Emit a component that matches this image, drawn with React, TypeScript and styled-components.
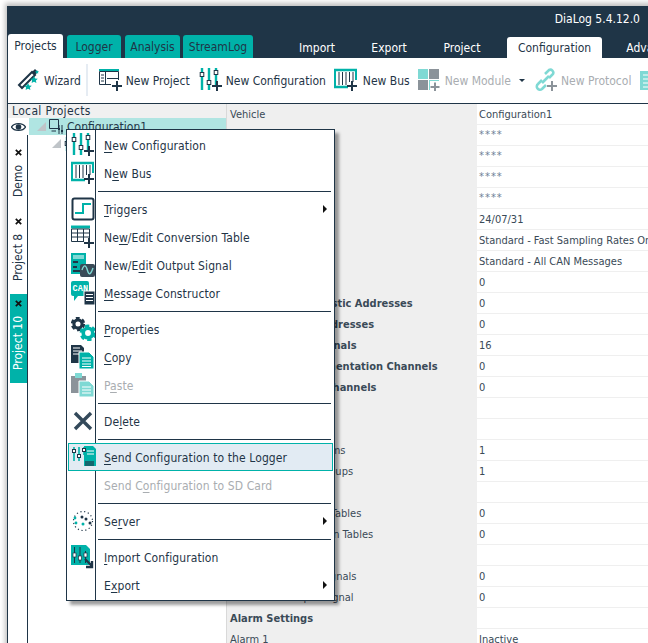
import React from "react";
import styled, { createGlobalStyle } from "styled-components";

const TEAL = "#00b2a9";
const DARK = "#1f3547";
const LTEAL = "#7fd9d4";
const GREY = "#8b939a";
const FONT = `"DejaVu Sans Condensed", "DejaVu Sans", sans-serif`;

const Global = createGlobalStyle`
  html, body { margin: 0; padding: 0; width: 648px; height: 643px; overflow: hidden; background: #fff; }
  #root { width: 648px; height: 643px; overflow: hidden; }
`;

const Page = styled.div`
  width: 648px;
  height: 643px;
  padding: 6px 0 0 7px;
  box-sizing: border-box;
  background: #fff;
  font-family: ${FONT};
  font-stretch: condensed;
  font-size: 12px;
  color: #222;
  overflow: hidden;
`;
const Window = styled.div`
  position: relative;
  width: 660px;
  height: 650px;
  border-left: 1px solid ${DARK};
  box-shadow: -2px -3px 5px rgba(0, 0, 0, 0.25);
  background: #fff;
  display: flex;
  flex-direction: column;
`;
const Header = styled.div`
  height: 52px;
  flex: none;
  background: ${DARK};
  display: flex;
  flex-direction: column;
`;
const TitleRow = styled.div`
  height: 29px;
  width: 632px;
  box-sizing: border-box;
  color: #fff;
  text-align: right;
  line-height: 26px;
`;
const TabRow = styled.div`
  height: 23px;
  display: flex;
  align-items: flex-end;
`;
const MainTab = styled.div<{ $active?: boolean; $w: number; $ml: number }>`
  width: ${(p) => p.$w}px;
  margin-left: ${(p) => p.$ml}px;
  height: ${(p) => (p.$active ? 24 : 23)}px;
  flex: none;
  text-align: center;
  line-height: 25px;
  box-sizing: border-box;
  border-radius: 3px 3px 0 0;
  color: ${DARK};
  background: ${(p) => (p.$active ? "#fff" : TEAL)};
`;
const RibbonTab = styled.div<{ $active?: boolean; $w: number; $ml?: number }>`
  width: ${(p) => p.$w}px;
  margin-left: ${(p) => p.$ml ?? 0}px;
  height: 21px;
  flex: none;
  text-align: center;
  line-height: 23px;
  border-radius: 3px 3px 0 0;
  color: ${(p) => (p.$active ? DARK : "#fff")};
  background: ${(p) => (p.$active ? "#fff" : "transparent")};
`;
const Toolbar = styled.div`
  height: 46px;
  flex: none;
  display: flex;
  align-items: center;
  background: #fff;
  border-bottom: 1px solid ${DARK};
  box-sizing: border-box;
  padding: 0 0 1px 9px;
`;
const ToolButton = styled.div<{ $disabled?: boolean; $ml?: number; $gap?: number }>`
  display: flex;
  align-items: center;
  gap: ${(p) => p.$gap ?? 3}px;
  margin-left: ${(p) => p.$ml ?? 0}px;
  flex: none;
  color: ${(p) => (p.$disabled ? "#a9adb1" : DARK)};
`;
const ToolLabel = styled.span`
  padding-top: 2px;
`;
const ToolSep = styled.div`
  width: 2px;
  height: 32px;
  margin: 0 11px 0 5px;
  background: #e6ecf3;
  flex: none;
`;
const Caret = styled.span`
  width: 0;
  height: 0;
  border: 3px solid transparent;
  border-top: 3px solid ${DARK};
  border-bottom: 0;
  margin-left: 3px;
`;
const Body = styled.div`
  flex: 1;
  display: flex;
  min-height: 0;
`;
const LeftPanel = styled.div`
  width: 218px;
  flex: none;
  display: flex;
  flex-direction: column;
`;
const PanelTitle = styled.div`
  height: 14px;
  line-height: 15px;
  padding-left: 4px;
  background: #f0f0f0;
  color: ${DARK};
  letter-spacing: 0.35px;
`;
const PanelMain = styled.div`
  flex: 1;
  display: flex;
`;
const Rail = styled.div`
  width: 19px;
  flex: none;
  border-right: 1px solid ${DARK};
  display: flex;
  flex-direction: column;
  align-items: flex-end;
`;
const EyeWrap = styled.div`
  height: 17px;
  width: 100%;
  background: #fff;
  display: flex;
  padding-left: 2px;
  box-sizing: border-box;
  align-items: center;
  margin-right: -1px;
  position: relative;
  z-index: 1;
  border-right: 1px solid #fff;
`;
const VerticalTab = styled.div<{ $active?: boolean; $h: number; $mt: number; $start: number }>`
  width: 17px;
  height: ${(p) => p.$h}px;
  margin-top: ${(p) => p.$mt}px;
  flex: none;
  background: ${(p) => (p.$active ? TEAL : "#fff")};
  color: ${(p) => (p.$active ? "#fff" : DARK)};
  writing-mode: vertical-rl;
  transform: rotate(180deg);
  display: flex;
  align-items: center;
  gap: 9px;
  padding-top: ${(p) => p.$start}px;
  box-sizing: border-box;
  line-height: 17px;
  white-space: nowrap;
`;
const CloseMark = styled.span`
  display: block;
  width: 7px;
  height: 7px;
  flex: none;
`;
const Tree = styled.div`
  flex: 1;
`;
const TreeRow = styled.div<{ $selected?: boolean; $indent: number }>`
  height: 17px;
  display: flex;
  align-items: center;
  gap: 3px;
  padding-left: ${(p) => p.$indent}px;
  margin-left: ${(p) => (p.$selected ? 1 : 0)}px;
  background: ${(p) => (p.$selected ? "#b0e5e2" : "transparent")};
  color: ${DARK};
  line-height: 17px;
`;
const TreeIcon = styled.span`
  display: block;
  width: 14px;
  height: 14px;
  overflow: hidden;
  flex: none;
`;
const TreeLabel = styled.span`
  padding-top: 2px;
  margin-left: -1px;
`;
const Grid = styled.div`
  flex: 1;
  display: grid;
  grid-template-columns: 250px 1fr;
  grid-auto-rows: 21px;
  border-left: 1px solid #d9d9d9;
  align-content: start;
  overflow: hidden;
  font-size: 11px;
`;
const NameCell = styled.div<{ $bold?: boolean }>`
  background: #efefef;
  padding-left: 3px;
  line-height: 22px;
  color: #3a4a57;
  font-weight: ${(p) => (p.$bold ? 700 : 400)};
  white-space: nowrap;
  overflow: hidden;
`;
const ValueCell = styled.div<{ $stars?: boolean }>`
  background: #fff;
  border-bottom: 1px solid #efefef;
  padding-left: 2px;
  line-height: ${(p) => (p.$stars ? 20 : 22)}px;
  color: ${(p) => (p.$stars ? "#6d8296" : "#3a4a57")};
  letter-spacing: ${(p) => (p.$stars ? 1 : 0)}px;
  white-space: nowrap;
  overflow: hidden;
`;
const Menu = styled.div`
  position: absolute;
  left: 58px;
  top: 123px;
  width: 269px;
  height: 472px;
  box-sizing: border-box;
  background: #fff;
  border: 1px solid ${DARK};
  box-shadow: 4px 4px 3px rgba(0, 0, 0, 0.38);
  padding: 1px 0 0 0;
  color: ${DARK};
  z-index: 5;
  letter-spacing: 0.1px;
`;
const Gutter = styled.div`
  position: absolute;
  left: 28px;
  top: 0;
  bottom: 0;
  width: 1px;
  background: ${DARK};
`;
const MenuRow = styled.div<{ $hot?: boolean; $disabled?: boolean }>`
  height: 28px;
  display: flex;
  align-items: center;
  position: relative;
  margin: 0 1px;
  box-sizing: border-box;
  color: ${(p) => (p.$disabled ? "#a9adb1" : DARK)};
  background: ${(p) => (p.$hot ? "#e2ebf3" : "transparent")};
  border: ${(p) => (p.$hot ? `1px solid ${TEAL}` : "0")};
  padding-left: ${(p) => (p.$hot ? 35 : 36)}px;
`;
const MenuLabel = styled.span`
  padding-top: 2px;
`;
const MenuIcon = styled.span`
  position: absolute;
  left: 2px;
  top: 1px;
  width: 26px;
  height: 26px;
  display: flex;
  align-items: center;
  justify-content: center;
`;
const MenuSep = styled.div`
  height: 1px;
  margin: 4px 3px 3px 31px;
  background: ${DARK};
`;
const Arrow = styled.span`
  position: absolute;
  right: 6px;
  top: 10px;
  width: 0;
  height: 0;
  border: 4px solid transparent;
  border-left: 4px solid #111;
  border-right: 0;
`;
const U = styled.span`
  text-decoration: underline;
  text-underline-offset: 2px;
  text-decoration-thickness: 1px;
`;

const Plus = ({ x, y, s = 10, c = DARK }: { x: number; y: number; s?: number; c?: string }) => (
  <path d={`M${x - s / 2} ${y}H${x + s / 2}M${x} ${y - s / 2}V${y + s / 2}`} stroke={c} strokeWidth={2} fill="none" />
);
const Svg = ({ w, h = w, children }: { w: number; h?: number; children: React.ReactNode }) => (
  <svg width={w} height={h} viewBox={`0 0 ${w} ${h}`} style={{ flex: "none", display: "block" }}>
    {children}
  </svg>
);

const Sliders = () => (
  <Svg w={24}>
    <g fill="none">
      <path d="M3 0V22M10 0V22M17 0V18" stroke={TEAL} strokeWidth={2.4} />
      <rect x="1.200" y="4.500" width="3.600" height="4" fill="#fff" stroke={DARK} />
      <rect x="8.200" y="12.500" width="3.600" height="4" fill="#fff" stroke={DARK} />
      <rect x="15.200" y="2.500" width="3.600" height="4" fill="#fff" stroke={DARK} />
    </g>
    <Plus x={18} y={18} />
  </Svg>
);
const WizardIcon = () => (
  <Svg w={24}>
    <path d="M2 17L15 4L18 7L5 20Z" fill="#fff" stroke={DARK} strokeWidth={2} />
    <path d="M15 4L18 1L21 4L18 7Z" fill={DARK} />
    <path d="M17 8l1.200 2.400 2.600.3-1.900 1.800.5 2.600-2.400-1.300-2.400 1.300.5-2.600-1.900-1.800 2.600-.3zM11 15l1.200 2.400 2.600.3-1.900 1.800.5 2.600-2.400-1.300-2.400 1.300.5-2.600-1.900-1.800 2.600-.3zM20 2l.6 1.200 1.400.2-1 1 .2 1.400-1.200-.7-1.200.7.2-1.400-1-1 1.400-.2z" fill={TEAL} />
  </Svg>
);
const ProjectIcon = () => (
  <Svg w={24}>
    <path d="M0 2H20" stroke={TEAL} strokeWidth={2} />
    <path d="M.5 3.500H19.500V16.500H.5Z" fill="none" stroke={DARK} />
    <path d="M6.500 4V16M2 7H5M2 10H5M2 13H5M8 10.500H19" stroke={DARK} strokeWidth={1} fill="none" />
    <rect x="12" y="12" width="12" height="12" fill="#fff" />
    <Plus x={18} y={18} />
  </Svg>
);
const BusIcon = () => (
  <Svg w={24}>
    <path d="M0 2H23M0 19H15" stroke={TEAL} strokeWidth={2.600} />
    <path d="M1 2V19M22 2V12" stroke={TEAL} strokeWidth={2} />
    <path d="M5 4V17M8.500 4V17M12 4V17M15.500 4V17M19 4V14" stroke={DARK} strokeWidth={1} />
    <rect x="14" y="14" width="10" height="10" fill="#fff" />
    <Plus x={18} y={18} />
  </Svg>
);
const ModuleIcon = () => (
  <Svg w={22}>
    <rect x="0" y="0" width="10" height="10" fill={LTEAL} />
    <rect x="11" y="0" width="10" height="10" fill={GREY} />
    <rect x="0" y="11" width="10" height="10" fill={GREY} />
    <rect x="11" y="11" width="10" height="10" fill={LTEAL} />
    <rect x="12" y="12" width="10" height="10" fill="#fff" />
    <Plus x={17} y={18} s={9} c={GREY} />
  </Svg>
);
const LinkIcon = () => (
  <Svg w={25}>
    <g fill="none" stroke={LTEAL} strokeWidth={2.600}>
      <path d="M9 12L5 16A3 3 0 0 0 9 21L13 17" />
      <path d="M14 10L18 6A3 3 0 0 0 14 2L10 6" transform="translate(2 0)" />
      <path d="M9 15L16 8" />
    </g>
    <Plus x={19} y={18} c={GREY} />
  </Svg>
);
const RowsIcon = () => (
  <Svg w={20}>
    <path d="M0 1H20V21H0Z" fill={LTEAL} />
    <path d="M3 5H17M3 9H17M3 13H17M3 17H17" stroke="#fff" />
  </Svg>
);
const EyeIcon = () => (
  <Svg w={15} h={12}>
    <path d="M.5 6C3 1.500 12 1.500 14.500 6C12 10.500 3 10.500 .5 6Z" fill="none" stroke={DARK} strokeWidth={1.400} />
    <circle cx="7.500" cy="6" r="2.800" fill={DARK} />
  </Svg>
);
const CloseIcon = () => (
  <Svg w={7}>
    <path d="M.8.8L6.200 6.200M6.200.8L.8 6.200" stroke="#111" strokeWidth={1.700} />
  </Svg>
);
const Expander = () => (
  <Svg w={9} h={9}>
    <path d="M9 0V9H0Z" fill="#bfc4c8" />
  </Svg>
);
const ConfigSmall = () => (
  <Svg w={16} h={16}>
    <path d="M.5.5H9.500V9.500H.5ZM2.500 12H7" fill="none" stroke={DARK} />
    <path d="M10 6V15M13 6V15" stroke={DARK} />
    <rect x="9" y="9" width="2" height="2" fill={DARK} />
    <rect x="12" y="11" width="2" height="2" fill={DARK} />
  </Svg>
);
const TriggerIcon = () => (
  <Svg w={24}>
    <rect x="1.500" y="1.500" width="21" height="21" rx="2" fill="none" stroke={DARK} strokeWidth={2} />
    <path d="M4 16H12V7H20" fill="none" stroke={TEAL} strokeWidth={2} />
  </Svg>
);
const TableIcon = () => (
  <Svg w={24}>
    <path d="M0 2H19" stroke={TEAL} strokeWidth={3} />
    <path d="M.5 4H18.500V16.500H.5ZM.5 8H18.500M.5 12H18.500M6.500 4V16M12.500 4V16" fill="none" stroke={DARK} />
    <rect x="13" y="13" width="11" height="11" fill="#fff" />
    <Plus x={18} y={18} />
  </Svg>
);
const OutputIcon = () => (
  <Svg w={24}>
    <rect x="0" y="0" width="15" height="21" fill={TEAL} />
    <path d="M2 3H13M2 5H13" stroke="#fff" />
    <path d="M2 8H7V10H2ZM2 13H6V15H2ZM2 17H9V19H2Z" fill={DARK} />
    <rect x="9" y="11" width="15" height="13" rx="2" fill="#3a4a57" />
    <path d="M11 17C13 11 15 12 16.500 17.500S20 21 22 15" fill="none" stroke="#7fd9d4" strokeWidth={1.400} />
  </Svg>
);
const CanIcon = () => (
  <Svg w={24}>
    <path d="M2 0H16Q18 0 18 2V13Q18 15 16 15H7L3 20V15H2Q0 15 0 13V2Q0 0 2 0Z" fill={TEAL} />
    <text x="1.500" y="10" fontSize="8.500" fontWeight="700" fill="#fff" fontFamily="Liberation Mono, monospace">CAN</text>
    <rect x="13" y="10" width="11" height="14" fill={DARK} stroke="#fff" />
    <path d="M15 13.500H22M15 16.500H22M15 19.500H22" stroke="#fff" />
  </Svg>
);
const Gear = ({ cx, cy, r, c }: { cx: number; cy: number; r: number; c: string }) => (
  <g>
    <circle cx={cx} cy={cy} r={r * 0.68} fill="none" stroke={c} strokeWidth={r * 0.52} />
    <circle cx={cx} cy={cy} r={r} fill="none" stroke={c} strokeWidth={r * 0.4} strokeDasharray={`${r * 0.62} ${r * 0.44}`} />
  </g>
);
const GearsIcon = () => (
  <Svg w={24}>
    <Gear cx={7} cy={7} r={6} c={DARK} />
    <Gear cx={17} cy={16} r={7} c={TEAL} />
  </Svg>
);
const CopyIcon = () => (
  <Svg w={24}>
    <path d="M0 0H10L13 3V18H0Z" fill={DARK} />
    <path d="M2 3H9M2 6H11M2 9H11" stroke="#fff" />
    <path d="M8 7H18L23 12V24H8Z" fill={TEAL} stroke="#fff" />
    <path d="M11 13H20M11 16H20M11 19H20M11 21.500H20" stroke="#fff" />
  </Svg>
);
const PasteIcon = () => (
  <Svg w={24}>
    <path d="M0 3H15V20H0Z" fill={GREY} />
    <path d="M4 0H11V5H4Z" fill={LTEAL} />
    <path d="M8 8H18L23 13V24H8Z" fill={LTEAL} stroke="#fff" />
    <path d="M11 14H20M11 17H20M11 20H20" stroke="#fff" />
  </Svg>
);
const DeleteIcon = () => (
  <Svg w={20}>
    <path d="M2 2L18 18M18 2L2 18" stroke="#33495a" strokeWidth={3.400} />
  </Svg>
);
const SendIcon = () => (
  <Svg w={24}>
    <path d="M12 0H21L24 3V20H12Z" fill={TEAL} />
    <path d="M15 5H22M15 8H22" stroke="#fff" />
    <path d="M13 15H22V20H13Z" fill={DARK} opacity="0.6" />
    <path d="M2 1V15M7 1V15" stroke={TEAL} strokeWidth={1.600} />
    <path d="M12 1V9" stroke={TEAL} strokeWidth={1.600} />
    <rect x="0.500" y="3.500" width="3" height="3" fill="#fff" stroke={DARK} />
    <rect x="5.500" y="8.500" width="3" height="3" fill="#fff" stroke={DARK} />
    <rect x="10.500" y="2.500" width="3" height="3" fill="#fff" stroke={DARK} />
  </Svg>
);
const ServerIcon = () => (
  <Svg w={24}>
    <circle cx="12" cy="12" r="9.500" fill="none" stroke={DARK} strokeWidth={1.200} strokeDasharray="1.200 2.600" />
    <circle cx="4" cy="9" r="1.400" fill={TEAL} />
    <circle cx="5" cy="14" r="1.400" fill={TEAL} />
    <circle cx="11" cy="8" r="1.500" fill={DARK} />
    <circle cx="15" cy="10" r="1.500" fill={DARK} />
    <circle cx="12" cy="15" r="1.500" fill={TEAL} />
    <circle cx="19" cy="14" r="1.500" fill={DARK} />
  </Svg>
);
const ImportIcon = () => (
  <Svg w={24}>
    <path d="M0 0H15L19 4V20H0Z" fill={TEAL} />
    <path d="M3.500 2V18M9 2V18M14.500 6V18" stroke={DARK} strokeWidth={1} />
    <rect x="2" y="8" width="3" height="4" fill="#fff" stroke={DARK} strokeWidth={0.7} />
    <rect x="7.500" y="11" width="3" height="4" fill="#fff" stroke={DARK} strokeWidth={0.7} />
    <rect x="13" y="8" width="3" height="4" fill="#fff" stroke={DARK} strokeWidth={0.7} />
    <path d="M14 14L21 21M21 16V22H15" fill="none" stroke={DARK} strokeWidth={2.400} />
  </Svg>
);

type Row = { n?: string; v?: string; b?: boolean; s?: boolean };
const rows: Row[] = [
  { n: "Vehicle", v: "Configuration1" },
  { v: "****", s: true },
  { v: "****", s: true },
  { v: "****", s: true },
  { v: "****", s: true },
  { v: "24/07/31" },
  { v: "Standard - Fast Sampling Rates Only" },
  { v: "Standard - All CAN Messages" },
  { v: "0" },
  { n: "Number of Diagnostic Addresses", v: "0", b: true },
  { n: "Number of Bus Addresses", v: "0", b: true },
  { n: "Number of Log Signals", v: "16", b: true },
  { n: "Number of Instrumentation Channels", v: "0", b: true },
  { n: "Number of Input Channels", v: "0", b: true },
  {},
  {},
  { n: "Number of Alarm Items", v: "1" },
  { n: "Number of Alarm Groups", v: "1" },
  {},
  { n: "Number of Function Tables", v: "0" },
  { n: "Number of Calibration Tables", v: "0" },
  {},
  { n: "Number of Digital Signals", v: "0" },
  { n: "Number of Output Signal", v: "0" },
  { n: "Alarm Settings", b: true },
  { n: "Alarm 1", v: "Inactive" },
];

export default function App() {
  return (
    <Page>
      <Global />
      <Window>
        <Header>
          <TitleRow>DiaLog 5.4.12.0</TitleRow>
          <TabRow>
            <MainTab $active $w={55} $ml={0}>Projects</MainTab>
            <MainTab $w={54} $ml={4}>Logger</MainTab>
            <MainTab $w={55} $ml={4}>Analysis</MainTab>
            <MainTab $w={70} $ml={3}>StreamLog</MainTab>
            <RibbonTab $w={72} $ml={28}>Import</RibbonTab>
            <RibbonTab $w={72}>Export</RibbonTab>
            <RibbonTab $w={74}>Project</RibbonTab>
            <RibbonTab $active $w={95} $ml={8}>Configuration</RibbonTab>
            <RibbonTab $w={80} $ml={11}>Advanced</RibbonTab>
          </TabRow>
        </Header>
        <Toolbar>
          <ToolButton><WizardIcon /><ToolLabel>Wizard</ToolLabel></ToolButton>
          <ToolSep />
          <ToolButton><ProjectIcon /><ToolLabel>New Project</ToolLabel></ToolButton>
          <ToolButton $ml={9}><Sliders /><ToolLabel>New Configuration</ToolLabel></ToolButton>
          <ToolButton $ml={8} $gap={5}><BusIcon /><ToolLabel>New Bus</ToolLabel></ToolButton>
          <ToolButton $ml={8} $disabled $gap={5}><ModuleIcon /><ToolLabel>New Module</ToolLabel><Caret /></ToolButton>
          <ToolButton $ml={8} $disabled><LinkIcon /><ToolLabel>New Protocol</ToolLabel></ToolButton>
          <ToolButton $ml={9} $disabled><RowsIcon /></ToolButton>
        </Toolbar>
        <Body>
          <LeftPanel>
            <PanelTitle>Local Projects</PanelTitle>
            <PanelMain>
              <Rail>
                <EyeWrap><EyeIcon /></EyeWrap>
                <VerticalTab $h={47} $mt={15} $start={0}>Demo<CloseMark><CloseIcon /></CloseMark></VerticalTab>
                <VerticalTab $h={61} $mt={23} $start={0}>Project 8<CloseMark><CloseIcon /></CloseMark></VerticalTab>
                <VerticalTab $active $h={89} $mt={13} $start={13}>Project 10<CloseMark><CloseIcon /></CloseMark></VerticalTab>
              </Rail>
              <Tree>
                <TreeRow $selected $indent={8}><Expander /><ConfigSmall /><TreeLabel>Configuration1</TreeLabel></TreeRow>
                <TreeRow $indent={24}><Expander /><TreeIcon><Sliders /></TreeIcon></TreeRow>
              </Tree>
            </PanelMain>
          </LeftPanel>
          <Grid>
            {rows.map((r, i) => (
              <React.Fragment key={i}>
                <NameCell $bold={r.b}>{r.n}</NameCell>
                <ValueCell $stars={r.s}>{r.v}</ValueCell>
              </React.Fragment>
            ))}
          </Grid>
        </Body>
        <Menu>
          <Gutter />
          <MenuRow><MenuIcon><Sliders /></MenuIcon><MenuLabel><U>N</U>ew Configuration</MenuLabel></MenuRow>
          <MenuRow><MenuIcon><BusIcon /></MenuIcon><MenuLabel>N<U>e</U>w Bus</MenuLabel></MenuRow>
          <MenuSep />
          <MenuRow><MenuIcon><TriggerIcon /></MenuIcon><MenuLabel><U>T</U>riggers</MenuLabel><Arrow /></MenuRow>
          <MenuRow><MenuIcon><TableIcon /></MenuIcon><MenuLabel>Ne<U>w</U>/Edit Conversion Table</MenuLabel></MenuRow>
          <MenuRow><MenuIcon><OutputIcon /></MenuIcon><MenuLabel>New/E<U>d</U>it Output Signal</MenuLabel></MenuRow>
          <MenuRow><MenuIcon><CanIcon /></MenuIcon><MenuLabel><U>M</U>essage Constructor</MenuLabel></MenuRow>
          <MenuSep />
          <MenuRow><MenuIcon><GearsIcon /></MenuIcon><MenuLabel><U>P</U>roperties</MenuLabel></MenuRow>
          <MenuRow><MenuIcon><CopyIcon /></MenuIcon><MenuLabel><U>C</U>opy</MenuLabel></MenuRow>
          <MenuRow $disabled><MenuIcon><PasteIcon /></MenuIcon><MenuLabel>P<U>a</U>ste</MenuLabel></MenuRow>
          <MenuSep />
          <MenuRow><MenuIcon><DeleteIcon /></MenuIcon><MenuLabel>De<U>l</U>ete</MenuLabel></MenuRow>
          <MenuSep />
          <MenuRow $hot><MenuIcon><SendIcon /></MenuIcon><MenuLabel><U>S</U>end Configuration to the Logger</MenuLabel></MenuRow>
          <MenuRow $disabled><MenuLabel>Send C<U>o</U>nfiguration to SD Card</MenuLabel></MenuRow>
          <MenuSep />
          <MenuRow><MenuIcon><ServerIcon /></MenuIcon><MenuLabel>Se<U>r</U>ver</MenuLabel><Arrow /></MenuRow>
          <MenuSep />
          <MenuRow><MenuIcon><ImportIcon /></MenuIcon><MenuLabel><U>I</U>mport Configuration</MenuLabel></MenuRow>
          <MenuRow><MenuLabel>E<U>x</U>port</MenuLabel><Arrow /></MenuRow>
        </Menu>
      </Window>
    </Page>
  );
}
